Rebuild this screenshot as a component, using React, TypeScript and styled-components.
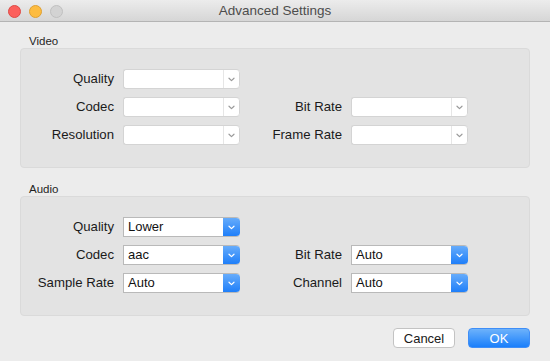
import React from "react";
import styled, { createGlobalStyle } from "styled-components";

type Field = { label: string; value?: string; enabled?: boolean };
type Row = [Field, Field?];

const videoRows: Row[] = [
  [{ label: "Quality" }],
  [{ label: "Codec" }, { label: "Bit Rate" }],
  [{ label: "Resolution" }, { label: "Frame Rate" }],
];

const audioRows: Row[] = [
  [{ label: "Quality", value: "Lower", enabled: true }],
  [
    { label: "Codec", value: "aac", enabled: true },
    { label: "Bit Rate", value: "Auto", enabled: true },
  ],
  [
    { label: "Sample Rate", value: "Auto", enabled: true },
    { label: "Channel", value: "Auto", enabled: true },
  ],
];

const GlobalStyle = createGlobalStyle`
  html, body {
    margin: 0;
    padding: 0;
    background: #ececec;
  }
  body {
    font-family: "Liberation Sans", Arial, sans-serif;
    color: #1a1a1a;
  }
`;

const Chevron = ({ light }: { light?: boolean }) => (
  <svg width="7" height="5" viewBox="0 0 7 5">
    <path
      d="M1 1.2 L3.5 3.6 L6 1.2"
      fill="none"
      stroke={light ? "#ffffff" : "#9a9a9a"}
      strokeWidth="1.2"
      strokeLinecap="round"
      strokeLinejoin="round"
    />
  </svg>
);

const PopUp = ({ field }: { field: Field }) => (
  <Select $enabled={field.enabled}>
    <SelectValue>{field.value ?? ""}</SelectValue>
    <SelectArrow $enabled={field.enabled}>
      <Chevron light={field.enabled} />
    </SelectArrow>
  </Select>
);

const Group = ({ title, rows }: { title: string; rows: Row[] }) => (
  <section>
    <GroupTitle>{title}</GroupTitle>
    <GroupBox>
      {rows.map((row, i) => (
        <React.Fragment key={i}>
          <FieldLabel>{row[0].label}</FieldLabel>
          <PopUp field={row[0]} />
          {row[1] ? (
            <>
              <FieldLabel>{row[1].label}</FieldLabel>
              <PopUp field={row[1]} />
            </>
          ) : (
            <Spacer />
          )}
        </React.Fragment>
      ))}
    </GroupBox>
  </section>
);

const App = (): React.ReactElement => {
  return (
    <>
      <GlobalStyle />
      <Window>
        <TitleBar>
          <Lights>
            <Light $fill="#fc605c" $edge="#de4a45" />
            <Light $fill="#fdbc40" $edge="#dea033" />
            <Light $fill="#d3d3d3" $edge="#c0c0c0" />
          </Lights>
          <Title>Advanced Settings</Title>
        </TitleBar>
        <Content>
          <Group title="Video" rows={videoRows} />
          <Group title="Audio" rows={audioRows} />
          <Footer>
            <Button>Cancel</Button>
            <Button $primary>OK</Button>
          </Footer>
        </Content>
      </Window>
    </>
  );
};

const Window = styled.div`
  width: 550px;
  height: 361px;
  background: #ececec;
  overflow: hidden;
`;

const TitleBar = styled.header`
  position: relative;
  height: 21px;
  display: flex;
  align-items: center;
  justify-content: center;
  background: linear-gradient(#ececec, #d6d6d6);
  border-bottom: 1px solid #b4b4b4;
`;

const Lights = styled.div`
  position: absolute;
  left: 8px;
  top: 5px;
  display: flex;
  gap: 8px;
`;

const Light = styled.span<{ $fill: string; $edge: string }>`
  width: 11px;
  height: 11px;
  border-radius: 50%;
  background: ${(p) => p.$fill};
  border: 0.5px solid ${(p) => p.$edge};
`;

const Title = styled.h1`
  margin: 0;
  font-size: 13.5px;
  font-weight: normal;
  color: #4d4d4d;
  line-height: 21px;
`;

const Content = styled.main`
  padding: 13px 20px 0 20px;
  display: flex;
  flex-direction: column;
`;

const GroupTitle = styled.div`
  font-size: 11.5px;
  line-height: 13px;
  padding-left: 9px;
  color: #1f1f1f;
  section + section & {
    margin-top: 15px;
  }
`;

const GroupBox = styled.div`
  box-sizing: border-box;
  height: 120px;
  padding: 20px 0 0 7px;
  background: #e3e3e3;
  border: 1px solid #dadada;
  border-radius: 4px;
  display: grid;
  grid-template-columns: 86px 117px 93px 117px;
  grid-auto-rows: 20px;
  column-gap: 9px;
  row-gap: 8px;
  align-content: start;
`;

const FieldLabel = styled.label`
  font-size: 13.2px;
  line-height: 20px;
  text-align: right;
  white-space: nowrap;
  color: #1a1a1a;
`;

const Spacer = styled.div`
  grid-column: span 2;
`;

const Select = styled.div<{ $enabled?: boolean }>`
  box-sizing: border-box;
  height: 20px;
  display: flex;
  background: #ffffff;
  border: 1px solid ${(p) => (p.$enabled ? "#b9b9b9" : "#d4d4d4")};
  border-right: none;
  border-radius: ${(p) => (p.$enabled ? "0 4px 4px 0" : "3px 4px 4px 3px")};
  overflow: hidden;
`;

const SelectValue = styled.span`
  flex: 1;
  padding-left: 4px;
  font-size: 13px;
  line-height: 18px;
  color: #111;
`;

const SelectArrow = styled.span<{ $enabled?: boolean }>`
  box-sizing: border-box;
  width: 17px;
  margin: -1px 0;
  display: flex;
  align-items: center;
  justify-content: center;
  border-radius: 0 4px 4px 0;
  ${(p) =>
    p.$enabled
      ? `background: linear-gradient(#6aaefb, #1b7cf9);`
      : `background: #ffffff;
         border: 1px solid #d4d4d4;
         border-left-color: #e6e6e6;`}
`;

const Footer = styled.footer`
  margin-top: 12px;
  display: flex;
  justify-content: flex-end;
  gap: 13px;
`;

const Button = styled.button<{ $primary?: boolean }>`
  box-sizing: border-box;
  width: 62px;
  height: 20px;
  padding: 0;
  font-family: "Liberation Sans", Arial, sans-serif;
  font-size: 13px;
  border-radius: 4px;
  color: ${(p) => (p.$primary ? "#ffffff" : "#1a1a1a")};
  background: ${(p) =>
    p.$primary ? "linear-gradient(#6db2fb, #1a7ffb)" : "#ffffff"};
  border: 1px solid ${(p) => (p.$primary ? "#3f8ef7" : "#c3c3c3")};
`;

export default App;
